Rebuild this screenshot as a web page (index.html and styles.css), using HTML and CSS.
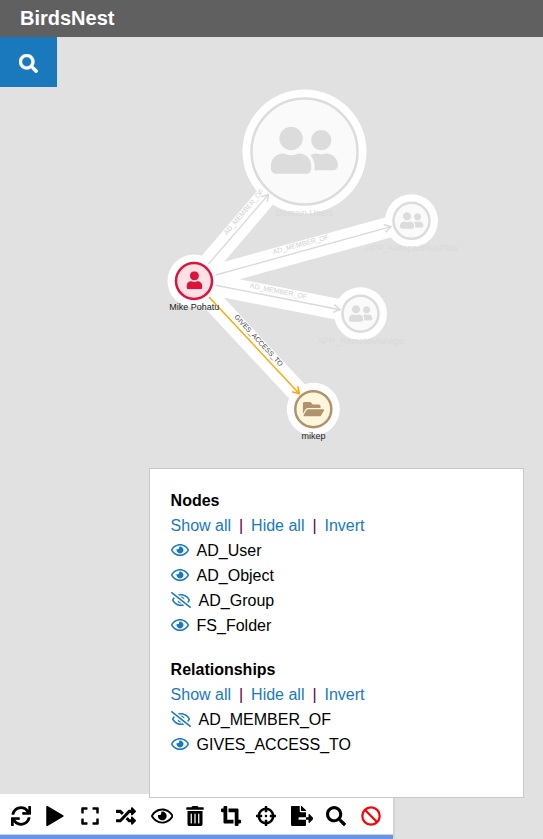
FILE: index.html
```html
<!DOCTYPE html>
<html lang="en">
<head>
<meta charset="utf-8">
<title>BirdsNest</title>
<link rel="stylesheet" href="styles.css">
</head>
<body>
<svg class="sprite" aria-hidden="true">
  <symbol id="search" viewBox="0 0 512 512"><path d="M505 442.7L405.3 343c-4.5-4.5-10.6-7-17-7H372c27.6-35.3 44-79.7 44-128C416 93.1 322.9 0 208 0S0 93.1 0 208s93.1 208 208 208c48.3 0 92.7-16.4 128-44v16.3c0 6.4 2.5 12.5 7 17l99.7 99.7c9.4 9.4 24.6 9.4 33.9 0l28.3-28.3c9.4-9.4 9.4-24.6.1-34zM208 336c-70.7 0-128-57.2-128-128 0-70.7 57.2-128 128-128 70.7 0 128 57.2 128 128 0 70.7-57.2 128-128 128z"/></symbol>
  <symbol id="user" viewBox="0 0 448 512"><path d="M224 256c70.7 0 128-57.3 128-128S294.7 0 224 0 96 57.3 96 128s57.3 128 128 128zm89.6 32h-16.7c-22.2 10.2-46.9 16-72.9 16s-50.6-5.8-72.9-16h-16.7C60.2 288 0 348.2 0 422.4V464c0 26.5 21.5 48 48 48h352c26.5 0 48-21.5 48-48v-41.6c0-74.2-60.2-134.4-134.4-134.4z"/></symbol>
  <symbol id="friends" viewBox="0 0 640 512"><path d="M192 256c61.9 0 112-50.1 112-112S253.9 32 192 32 80 82.1 80 144s50.1 112 112 112zm76.8 32h-8.3c-20.8 10-43.9 16-68.5 16s-47.6-6-68.5-16h-8.3C51.6 288 0 339.6 0 403.2V432c0 26.5 21.5 48 48 48h288c26.5 0 48-21.5 48-48v-28.8c0-63.6-51.6-115.2-115.2-115.2zM480 256c53 0 96-43 96-96s-43-96-96-96-96 43-96 96 43 96 96 96zm48 32h-3.8c-13.9 4.8-28.6 8-44.2 8s-30.3-3.2-44.2-8H432c-20.4 0-39.2 5.9-55.7 15.4 24.4 26.3 39.7 61.2 39.7 99.8v38.4c0 2.2-.5 4.3-.6 6.4H592c26.5 0 48-21.5 48-48 0-61.9-50.1-112-112-112z"/></symbol>
  <symbol id="folder" viewBox="0 0 576 512"><path d="M572.694 292.093L500.27 416.248A63.997 63.997 0 0 1 444.989 448H45.025c-18.523 0-30.064-20.093-20.731-36.093l72.424-124.155A64 64 0 0 1 152 256h399.964c18.523 0 30.064 20.093 20.73 36.093zM152 224h328v-48c0-26.51-21.49-48-48-48H272l-64-64H48C21.49 64 0 85.49 0 112v278.046l69.077-118.418C86.214 242.25 117.989 224 152 224z"/></symbol>
  <symbol id="eye" viewBox="0 0 576 512"><path d="M288 144a110.94 110.94 0 0 0-31.24 5 55.4 55.4 0 0 1 7.24 27 56 56 0 0 1-56 56 55.4 55.4 0 0 1-27-7.24A111.71 111.71 0 1 0 288 144zm284.52 97.4C518.29 135.59 410.93 64 288 64S57.68 135.64 3.48 241.41a32.35 32.35 0 0 0 0 29.19C57.71 376.41 165.07 448 288 448s230.32-71.64 284.52-177.41a32.35 32.35 0 0 0 0-29.19zM288 400c-98.65 0-189.09-55-237.93-144C98.91 167 189.34 112 288 112s189.09 55 237.93 144C477.1 345 386.66 400 288 400z"/></symbol>
  <symbol id="eye-slash" viewBox="0 0 640 512"><path d="M634 471L36 3.51A16 16 0 0 0 13.51 6l-10 12.49A16 16 0 0 0 6 41l598 467.49a16 16 0 0 0 22.49-2.49l10-12.49A16 16 0 0 0 634 471zM296.79 146.47l134.79 105.38C429.36 191.91 380.48 144 320 144a112.26 112.26 0 0 0-23.21 2.47zm46.42 219.07L208.42 260.16C210.65 320.09 259.53 368 320 368a113 113 0 0 0 23.21-2.46zM320 112c98.65 0 189.09 55 237.93 144a285.53 285.53 0 0 1-44 60.2l37.74 29.5a333.7 333.7 0 0 0 52.9-75.11 32.35 32.35 0 0 0 0-29.19C550.29 135.59 442.93 64 320 64c-36.7 0-71.71 7-104.63 18.81l46.41 36.29c18.94-4.3 38.34-7.1 58.22-7.1zm0 288c-98.65 0-189.08-55-237.93-144a285.47 285.47 0 0 1 44.05-60.19l-37.74-29.5a333.6 333.6 0 0 0-52.89 75.1 32.35 32.35 0 0 0 0 29.19C89.72 376.41 197.08 448 320 448c36.7 0 71.71-7.05 104.63-18.81l-46.41-36.28C359.28 397.2 339.89 400 320 400z"/></symbol>
  <symbol id="sync" viewBox="0 0 512 512"><path d="M440.65 12.57l4 82.77A247.16 247.16 0 0 0 255.83 8C134.73 8 33.91 94.92 12.29 209.82A12 12 0 0 0 24.09 224h49.05a12 12 0 0 0 11.67-9.26 175.91 175.91 0 0 1 317-56.94l-101.46-4.86a12 12 0 0 0-12.57 12v47.41a12 12 0 0 0 12 12H500a12 12 0 0 0 12-12V12a12 12 0 0 0-12-12h-47.37a12 12 0 0 0-11.98 12.57zM255.83 432a175.61 175.61 0 0 1-146-77.8l101.8 4.87a12 12 0 0 0 12.57-12v-47.4a12 12 0 0 0-12-12H12a12 12 0 0 0-12 12V500a12 12 0 0 0 12 12h47.35a12 12 0 0 0 12-12.6l-4.15-82.57A247.17 247.17 0 0 0 255.83 504c121.11 0 221.93-86.92 243.55-201.82a12 12 0 0 0-11.8-14.18h-49.05a12 12 0 0 0-11.67 9.26A175.86 175.86 0 0 1 255.83 432z"/></symbol>
  <symbol id="play" viewBox="0 0 448 512"><path d="M432 238L34 3C18-6 0 2 0 22V490c0 20 18 28 34 19L432 274c16-9 16-27 0-36z"/></symbol>
  <symbol id="expand" viewBox="0 0 448 512"><path d="M0 180V56c0-13.3 10.7-24 24-24h124c6.6 0 12 5.4 12 12v40c0 6.600-5.400 12-12 12H64v84c0 6.600-5.400 12-12 12H12c-6.600 0-12-5.400-12-12zM288 44v40c0 6.600 5.400 12 12 12h84v84c0 6.600 5.400 12 12 12h40c6.600 0 12-5.400 12-12V56c0-13.300-10.700-24-24-24H300c-6.600 0-12 5.400-12 12zm148 276h-40c-6.600 0-12 5.400-12 12v84h-84c-6.600 0-12 5.400-12 12v40c0 6.600 5.400 12 12 12h124c13.300 0 24-10.700 24-24V332c0-6.600-5.400-12-12-12zM160 468v-40c0-6.600-5.400-12-12-12H64v-84c0-6.600-5.400-12-12-12H12c-6.600 0-12 5.400-12 12v124c0 13.300 10.700 24 24 24h124c6.600 0 12-5.400 12-12z"/></symbol>
  <symbol id="random" viewBox="0 0 512 512"><path d="M504.971 359.029c9.373 9.373 9.373 24.569 0 33.941l-80 79.984c-15.01 15.01-40.971 4.49-40.971-16.971V416h-58.785a12.004 12.004 0 0 1-8.773-3.812l-70.556-75.596 53.333-57.143L352 336h32v-39.981c0-21.438 25.943-31.998 40.971-16.971l80 79.981zM12 176h84l52.781 56.551 53.333-57.143-70.556-75.596A11.999 11.999 0 0 0 122.785 96H12c-6.627 0-12 5.373-12 12v56c0 6.627 5.373 12 12 12zm372 0v39.984c0 21.46 25.961 31.98 40.971 16.971l80-79.984c9.373-9.373 9.373-24.569 0-33.941l-80-79.981C409.943 24.021 384 34.582 384 56.019V96h-58.785a12.004 12.004 0 0 0-8.773 3.812L96 336H12c-6.627 0-12 5.373-12 12v56c0 6.627 5.373 12 12 12h110.785c3.326 0 6.503-1.381 8.773-3.812L352 176h32z"/></symbol>
  <symbol id="trash" viewBox="0 0 448 512"><path d="M32 464a48 48 0 0 0 48 48h288a48 48 0 0 0 48-48V128H32zm272-256a16 16 0 0 1 32 0v224a16 16 0 0 1-32 0zm-96 0a16 16 0 0 1 32 0v224a16 16 0 0 1-32 0zm-96 0a16 16 0 0 1 32 0v224a16 16 0 0 1-32 0zM432 32H312l-9.400-18.700A24 24 0 0 0 281.100 0H166.800a23.720 23.720 0 0 0-21.400 13.300L136 32H16A16 16 0 0 0 0 48v32a16 16 0 0 0 16 16h416a16 16 0 0 0 16-16V48a16 16 0 0 0-16-16z"/></symbol>
  <symbol id="crop" viewBox="0 0 512 512"><path d="M488 352h-40V96c0-17.670-14.330-32-32-32H192v96h160v328c0 13.250 10.750 24 24 24h48c13.250 0 24-10.750 24-24v-40h40c13.250 0 24-10.750 24-24v-48c0-13.260-10.750-24-24-24zM160 24c0-13.260-10.750-24-24-24H88C74.750 0 64 10.740 64 24v40H24C10.750 64 0 74.740 0 88v48c0 13.250 10.750 24 24 24h40v256c0 17.670 14.330 32 32 32h224v-96H160V24z"/></symbol>
  <symbol id="crosshairs" viewBox="0 0 512 512"><path d="M500 224h-30.364C455.724 130.325 381.675 56.276 288 42.364V12c0-6.627-5.373-12-12-12h-40c-6.627 0-12 5.373-12 12v30.364C130.325 56.276 56.276 130.325 42.364 224H12c-6.627 0-12 5.373-12 12v40c0 6.627 5.373 12 12 12h30.364C56.276 381.675 130.325 455.724 224 469.636V500c0 6.627 5.373 12 12 12h40c6.627 0 12-5.373 12-12v-30.364C381.675 455.724 455.724 381.675 469.636 288H500c6.627 0 12-5.373 12-12v-40c0-6.627-5.373-12-12-12zM288 404.634V364c0-6.627-5.373-12-12-12h-40c-6.627 0-12 5.373-12 12v40.634C165.826 392.232 119.783 346.243 107.366 288H148c6.627 0 12-5.373 12-12v-40c0-6.627-5.373-12-12-12h-40.634C119.768 165.826 165.757 119.783 224 107.366V148c0 6.627 5.373 12 12 12h40c6.627 0 12-5.373 12-12v-40.634C346.174 119.768 392.217 165.757 404.634 224H364c-6.627 0-12 5.373-12 12v40c0 6.627 5.373 12 12 12h40.634C392.232 346.174 346.243 392.217 288 404.634zM288 256c0 17.673-14.327 32-32 32s-32-14.327-32-32c0-17.673 14.327-32 32-32s32 14.327 32 32z"/></symbol>
  <symbol id="export" viewBox="0 0 576 512"><path d="M384 121.900c0-6.300-2.500-12.400-7-16.900L279.100 7c-4.500-4.500-10.600-7-17-7H256v128h128zM571 308l-95.700-96.400c-10.100-10.100-27.400-3-27.400 11.300V288h-64v64h64v65.200c0 14.300 17.300 21.400 27.400 11.300L571 332c6.600-6.600 6.600-17.400 0-24zm-379 28v-32c0-8.800 7.200-16 16-16h176V160H248c-13.200 0-24-10.800-24-24V0H24C10.700 0 0 10.700 0 24v464c0 13.300 10.700 24 24 24h336c13.300 0 24-10.700 24-24V352H208c-8.800 0-16-7.200-16-16z"/></symbol>
  <symbol id="ban" viewBox="0 0 20 20"><g fill="none" stroke="currentColor" stroke-width="2.200"><circle cx="10" cy="10" r="8.700"/><path d="M3.800 3.800l12.400 12.400"/></g></symbol>
  <marker id="tip-muted" viewBox="0 0 9 9" refX="8" refY="4.500" markerWidth="9" markerHeight="9" markerUnits="userSpaceOnUse" orient="auto"><path d="M1.500 .5L8 4.500 1.500 8.500" fill="none" stroke="#dadada" stroke-width="1.500"/></marker>
  <marker id="tip-active" viewBox="0 0 9 9" refX="8" refY="4.500" markerWidth="9" markerHeight="9" markerUnits="userSpaceOnUse" orient="auto"><path d="M1.500 .5L8 4.500 1.500 8.500" fill="none" stroke="#ffa500" stroke-width="1.600"/></marker>
</svg>

<header class="header">BirdsNest</header>
<main class="stage">
  <svg class="graph" viewBox="0 37 543 757">
    <g class="halo-edges">
      <path d="M194 281L304.500 151.500M194 281L411.500 221M194 281L360.500 313.700M194 281L313.300 409"/>
    </g>
    <g class="halos">
      <circle cx="304.500" cy="151.500" r="62"/>
      <circle cx="411.500" cy="220.800" r="26.500"/>
      <circle cx="360.500" cy="313.700" r="26.500"/>
      <circle cx="194" cy="281" r="26.500"/>
      <circle cx="313.300" cy="409.200" r="26.500"/>
    </g>
    <g class="edges">
      <path d="M208.500 264L268.500 194.500"/>
      <path d="M215.500 275L391 226.700"/>
      <path d="M215.700 285.200L340 309.700"/>
      <path class="active" d="M209 297L299.300 393.700"/>
    </g>
    <g class="edge-labels">
      <text transform="translate(245.500 213.500) rotate(-49.500)">AD_MEMBER_OF</text>
      <text transform="translate(301.500 246.500) rotate(-15.400)">AD_MEMBER_OF</text>
      <text transform="translate(278 293.500) rotate(11.200)">AD_MEMBER_OF</text>
      <text class="active" transform="translate(257 342) rotate(47)">GIVES_ACCESS_TO</text>
    </g>
    <g class="node muted">
      <circle cx="304.500" cy="151.500" r="53"/>
      <use href="#friends" x="271" y="123.400" width="67" height="53.600"/>
      <text x="304.500" y="215.500">Domain Users</text>
    </g>
    <g class="node muted">
      <circle cx="411.500" cy="220.800" r="18"/>
      <use href="#friends" x="400" y="211" width="23.500" height="18.800"/>
      <text x="411.500" y="250.500">APP_NotepadPlusPlus</text>
    </g>
    <g class="node muted">
      <circle cx="360.500" cy="313.700" r="18"/>
      <use href="#friends" x="349" y="304" width="23.500" height="18.800"/>
      <text x="360.500" y="343.700">APP_RemoteManage</text>
    </g>
    <g class="node person">
      <circle cx="194" cy="281" r="18"/>
      <use href="#user" x="186.500" y="271.200" width="15.800" height="18"/>
      <text x="194.300" y="309.800">Mike Pohatu</text>
    </g>
    <g class="node folder">
      <circle cx="313.300" cy="409.200" r="18"/>
      <use href="#folder" x="302.700" y="399.700" width="21.400" height="19"/>
      <text x="313.500" y="439">mikep</text>
    </g>
  </svg>
  <button class="search-btn" aria-label="Search"><svg><use href="#search"/></svg></button>
  <section class="panel">
    <h2>Nodes</h2>
    <div class="links"><a>Show all</a><span>|</span><a>Hide all</a><span>|</span><a>Invert</a></div>
    <ul>
      <li><svg class="eye"><use href="#eye"/></svg>AD_User</li>
      <li><svg class="eye"><use href="#eye"/></svg>AD_Object</li>
      <li><svg class="slash"><use href="#eye-slash"/></svg>AD_Group</li>
      <li><svg class="eye"><use href="#eye"/></svg>FS_Folder</li>
    </ul>
    <h2>Relationships</h2>
    <div class="links"><a>Show all</a><span>|</span><a>Hide all</a><span>|</span><a>Invert</a></div>
    <ul>
      <li><svg class="slash"><use href="#eye-slash"/></svg>AD_MEMBER_OF</li>
      <li><svg class="eye"><use href="#eye"/></svg>GIVES_ACCESS_TO</li>
    </ul>
  </section>
</main>
<footer class="toolbar">
  <div class="tools">
    <span><svg><use href="#sync"/></svg></span>
    <span class="narrow"><svg><use href="#play"/></svg></span>
    <span class="narrow"><svg><use href="#expand"/></svg></span>
    <span><svg><use href="#random"/></svg></span>
    <span class="look"><svg class="wide"><use href="#eye"/></svg></span>
    <span class="narrow"><svg><use href="#trash"/></svg></span>
    <span><svg><use href="#crop"/></svg></span>
    <span><svg><use href="#crosshairs"/></svg></span>
    <span class="look"><svg class="wide"><use href="#export"/></svg></span>
    <span><svg><use href="#search"/></svg></span>
    <span class="ban"><svg><use href="#ban"/></svg></span>
  </div>
</footer>
</body>
</html>
```
FILE: styles.css
```css
* { box-sizing: border-box; }
body {
  margin: 0;
  height: 839px;
  display: flex;
  flex-direction: column;
  overflow: hidden;
  background: #e1e1e1;
  color: #000;
  font: 16px/25px "Liberation Sans", Arial, sans-serif;
}
svg { display: block; fill: currentColor; }
.sprite { position: absolute; width: 0; height: 0; }
.header {
  height: 37px;
  padding-left: 20px;
  background: #606060;
  color: #fff;
  font-size: 20px;
  font-weight: bold;
  line-height: 36px;
}
.stage { position: relative; height: 757px; }
.graph { width: 543px; height: 757px; }
.halo-edges { fill: none; stroke: #fff; stroke-width: 21; }
.halos { fill: #fff; }
.edges { fill: none; stroke: #dadada; stroke-width: 1.4; }
.edges path { marker-end: url(#tip-muted); }
.edges .active { stroke: #ffa500; marker-end: url(#tip-active); }
.graph text { text-anchor: middle; }
.edge-labels { font-size: 7px; fill: #cfcfcf; }
.edge-labels .active { fill: #444; }
.node circle { stroke: currentColor; stroke-width: 2.5; }
.node text { font-size: 9px; fill: #222; }
.muted { color: #dcdcdc; }
.muted circle { fill: #fafafa; }
.node.muted text { fill: #d9d9d9; }
.person { color: #dc143c; }
.person circle { fill: #ffe1e6; }
.folder { color: #b0926c; }
.folder circle { fill: #fff6dc; }
.search-btn {
  position: absolute;
  top: 0;
  left: 0;
  display: flex;
  align-items: center;
  justify-content: center;
  width: 57px;
  height: 50px;
  padding: 2px 0 0;
  border: 0;
  background: #1979bc;
  color: #fff;
}
.search-btn svg { width: 19px; height: 19px; stroke: #fff; stroke-width: 12px; }
.panel {
  position: absolute;
  z-index: 1;
  top: 431px;
  left: 149px;
  width: 375px;
  height: 330px;
  padding: 19px 20px 19px 20.6px;
  border: 1px solid #c8c8c8;
  background: #fff;
}
h2 { margin: 0; font-size: 16px; line-height: 25px; }
.links { display: flex; gap: 8px; }
.links a { color: #1979bc; }
.links span { color: #600040; width: 4px; }
ul { margin: 0 0 19px; padding: 0; list-style: none; }
li { display: flex; align-items: center; gap: 8px; }
li svg { height: 16px; margin-bottom: 1px; color: #1979bc; }
.eye { width: 18px; }
.slash { width: 20px; }
.toolbar {
  width: 393px;
  height: 45px;
  background: #fff;
  border-bottom: 4px solid #6495ed;
  box-shadow: 2px 0 #d4d4d4;
}
.tools {
  display: flex;
  align-items: center;
  height: 41px;
  padding: 3px 0 0 3.5px;
  border-bottom: 1px solid #d3d3d3;
}
.tools span { display: flex; justify-content: center; width: 35px; }
.tools svg { width: 20px; height: 20px; }
.tools .narrow svg { width: 18px; margin-right: 2px; }
.tools .wide { width: 22.5px; }
.tools .look { padding-left: 2px; }
.tools .ban { color: #f00; }
```
